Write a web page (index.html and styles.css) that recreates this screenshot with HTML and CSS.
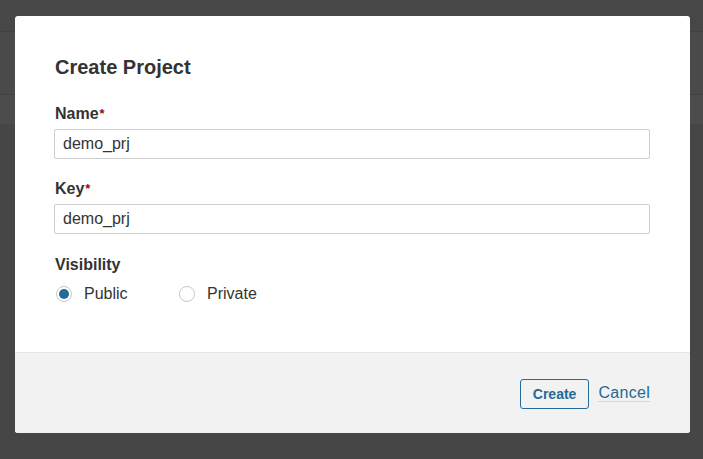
FILE: index.html
```html
<!DOCTYPE html>
<html lang="en">
<head>
<meta charset="utf-8">
<title>Create Project</title>
<link rel="stylesheet" href="styles.css">
</head>
<body>
<div class="page">
  <div class="topbar"></div>
  <div class="navbar"></div>
  <div class="subbar"></div>
  <div class="content"></div>
</div>
<div class="overlay">
  <div class="modal">
    <div class="modal-body">
      <h2 class="modal-title">Create Project</h2>
      <div class="field">
        <label class="field-label">Name<span class="req">*</span></label>
        <input class="text-input" type="text" value="demo_prj">
      </div>
      <div class="field">
        <label class="field-label">Key<span class="req">*</span></label>
        <input class="text-input" type="text" value="demo_prj">
      </div>
      <div class="field field-last">
        <label class="field-label">Visibility</label>
        <div class="radio-group">
          <span class="radio-option"><span class="radio checked"></span>Public</span>
          <span class="radio-option"><span class="radio"></span>Private</span>
        </div>
      </div>
    </div>
    <div class="modal-footer">
      <button class="btn-create">Create</button>
      <a class="link-cancel" href="#">Cancel</a>
    </div>
  </div>
</div>
</body>
</html>
```
FILE: styles.css
```css
* { box-sizing: border-box; }
html, body { margin: 0; padding: 0; }
body {
  width: 703px;
  height: 459px;
  overflow: hidden;
  font-family: "Liberation Sans", Arial, sans-serif;
  font-size: 16px;
  color: #333;
  background: #464646;
  position: relative;
}
.page { display: flex; flex-direction: column; }
.topbar { height: 32px; background: #474747; border-bottom: 1px solid #404040; }
.navbar { height: 63px; background: #4a4a4a; border-bottom: 1px solid #414141; }
.subbar { height: 29px; background: #4c4c4c; }
.content { flex: 1; }

.overlay {
  position: absolute;
  inset: 0;
  display: flex;
  justify-content: flex-start;
  align-items: flex-start;
  padding: 16px 0 0 15px;
}
.modal {
  width: 675px;
  height: 417px;
  background: #fff;
  border-radius: 3px;
  overflow: hidden;
  display: flex;
  flex-direction: column;
}
.modal-body {
  flex: 1;
  padding: 37px 40px 0 40px;
}
.modal-title {
  margin: 0 0 23px;
  font-size: 20px;
  line-height: 28px;
  font-weight: bold;
  color: #333;
}
.field { margin-bottom: 20px; }
.field + .field-last { margin-top: 21px; }
.field-label {
  display: block;
  font-weight: bold;
  font-size: 16px;
  line-height: 20px;
  margin-bottom: 5px;
}
.req { color: #a4030f; font-size: 13px; vertical-align: top; margin-left: 1px; }
.text-input {
  display: block;
  width: 596px;
  height: 30px;
  margin-left: -1px;
  border: 1px solid #cdcdcd;
  border-radius: 2px;
  padding: 0 8px;
  font-family: inherit;
  font-size: 16px;
  color: #333;
  background: #fff;
  outline: none;
}
.radio-group {
  display: flex;
  margin-top: 9px;
  height: 20px;
  align-items: center;
}
.radio-option {
  display: flex;
  align-items: center;
  width: 123px;
  line-height: 20px;
}
.radio {
  width: 16px;
  height: 16px;
  border: 1px solid #c8c8c8;
  border-radius: 50%;
  margin-left: 1px;
  margin-right: 12px;
  display: flex;
  align-items: center;
  justify-content: center;
  background: #fff;
}
.radio.checked::after {
  content: "";
  width: 10px;
  height: 10px;
  border-radius: 50%;
  background: #236a97;
}
.modal-footer {
  height: 81px;
  background: #f2f2f2;
  border-top: 1px solid #e6e6e6;
  display: flex;
  justify-content: flex-end;
  align-items: center;
  padding: 0 40px 0 0;
  gap: 9px;
}
.btn-create {
  height: 30px;
  padding: 0 12px;
  border: 1px solid #236a97;
  border-radius: 3px;
  background: transparent;
  color: #236a97;
  font-family: inherit;
  font-weight: bold;
  font-size: 14px;
  margin-top: 1px;
}
.link-cancel {
  color: #236a97;
  text-decoration: none;
  font-size: 16px;
  line-height: 17px;
  letter-spacing: 0.3px;
  border-bottom: 1px solid #c9dcea;
}
```
